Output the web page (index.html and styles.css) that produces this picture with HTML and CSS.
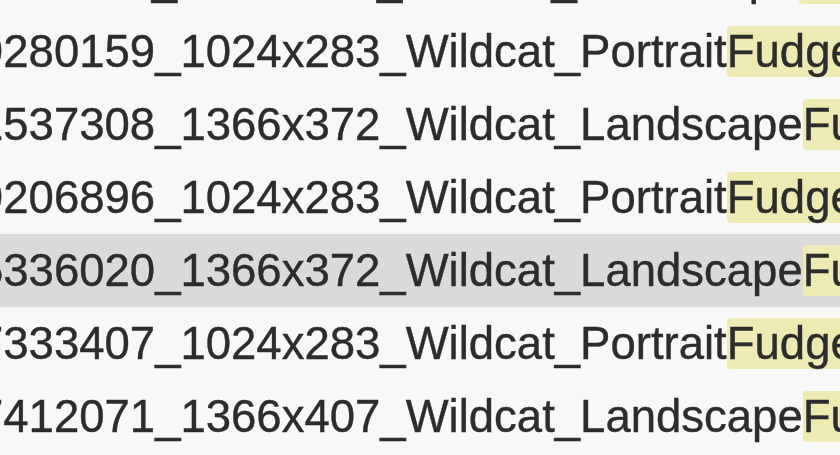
FILE: index.html
```html
<!DOCTYPE html>
<html lang="en">
<head>
  <meta charset="UTF-8" />
  <title>Search results</title>
  <link rel="stylesheet" href="styles.css">
</head>
<body>

<ul class="results">
  <li class="row">4418112_1366x372_Wildcat_Landscape<span class="match">Fudge</span>.jpg</li>
  <li class="row">9280159_1024x283_Wildcat_Portrait<span class="match">Fudge</span>.jpg</li>
  <li class="row">1537308_1366x372_Wildcat_Landscape<span class="match">Fudge</span>.jpg</li>
  <li class="row">9206896_1024x283_Wildcat_Portrait<span class="match">Fudge</span>.jpg</li>
  <li class="row selected">5336020_1366x372_Wildcat_Landscape<span class="match">Fudge</span>.jpg</li>
  <li class="row">7333407_1024x283_Wildcat_Portrait<span class="match">Fudge</span>.jpg</li>
  <li class="row">7412071_1366x407_Wildcat_Landscape<span class="match">Fudge</span>.jpg</li>
  <li class="row">7519030_1024x283_Wildcat_Portrait<span class="match">Fudge</span>.jpg</li>
</ul>

</body>
</html>
```

FILE: styles.css
```css
html, body {
  margin: 0;
  padding: 0;
  height: 100%;
  overflow: hidden;
  background: #f8f8f8;
}
/* list is scrolled: first row only shows its bottom edge */
.results {
  list-style: none;
  margin: -58px 0 0 -22px;
  padding: 0;
  font-family: "Liberation Sans", Arial, sans-serif;
  font-size: 45.5px;
  color: #2c2c2c;
  -webkit-text-stroke: 0.4px #2c2c2c;
  filter: blur(0.5px);
}
.row {
  height: 73px;
  line-height: 73px;
  white-space: nowrap;
}
.selected {
  background: #dadada;
}
.match {
  background: #eeeab4;
  border-radius: 4px;
}
```
